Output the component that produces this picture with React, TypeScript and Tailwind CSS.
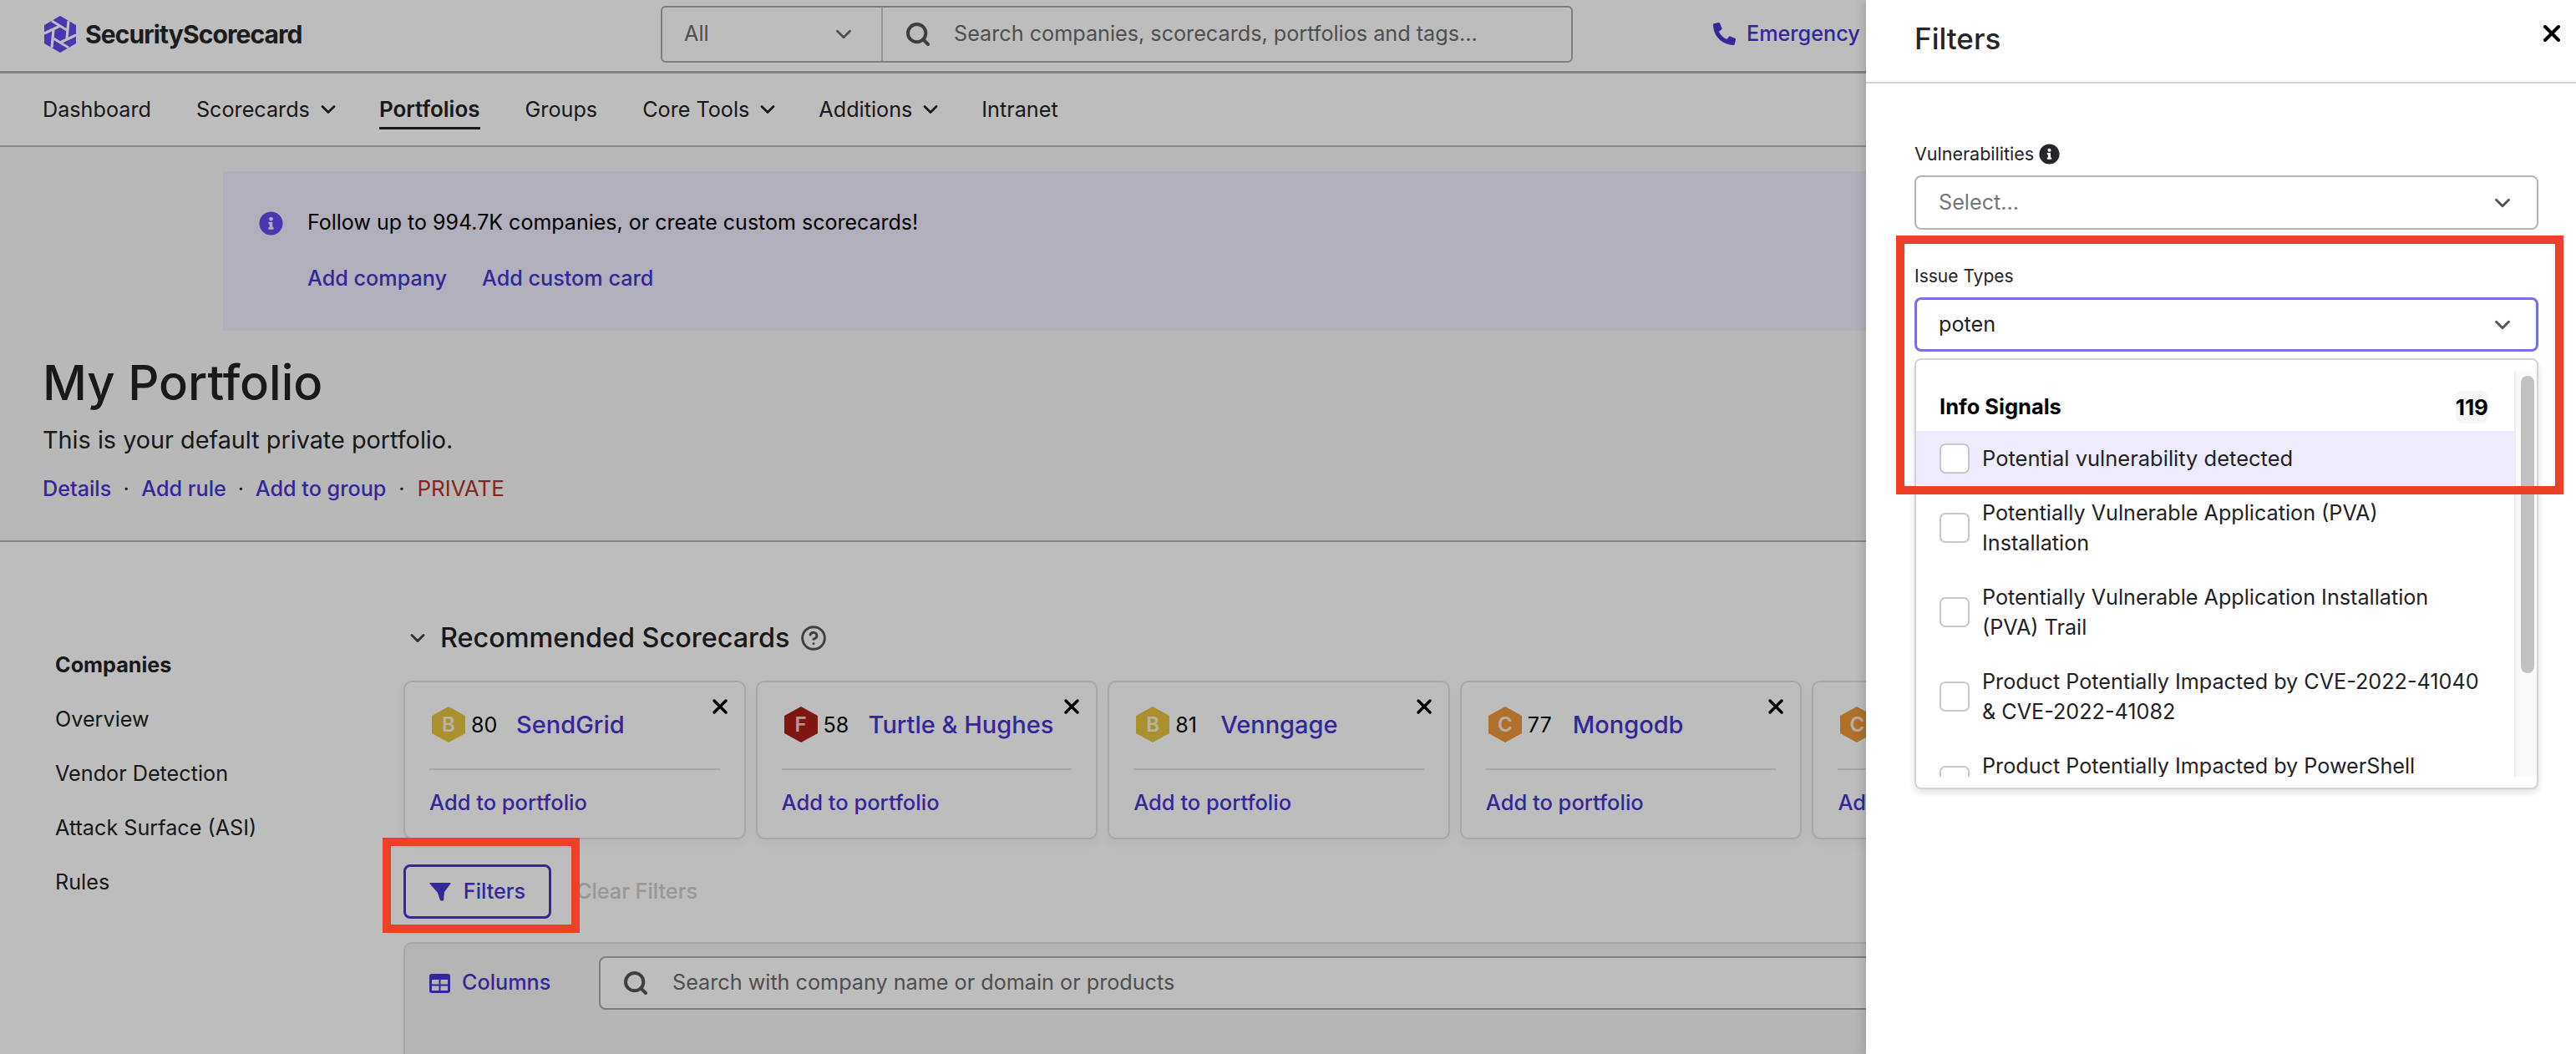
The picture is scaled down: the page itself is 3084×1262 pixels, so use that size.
import React from 'react';
import { ChevronDown, CircleHelp, Search, X } from 'lucide-react';
import { FaInfoCircle, FaPhoneAlt } from 'react-icons/fa';

// Marque : hexagone découpé en moulinet
function Logo() {
  return (
    <svg viewBox="0 0 38 44" className="w-[38px] h-[44px] shrink-0">
      <polygon points="19,0 38,11 38,33 19,44 0,33 0,11" fill="#6549ee" />
      <g stroke="#ffffff" strokeWidth="3.2" fill="none">
        <path d="M9 6 L27 17" />
        <path d="M29 6 L27 27" />
        <path d="M38 23 L19 32" />
        <path d="M29 38 L11 27" />
        <path d="M9 38 L11 17" />
        <path d="M0 21 L19 12" />
      </g>
    </svg>
  );
}

function GradeHex({ grade, color }: { grade: string; color: string }) {
  return (
    <div className="relative w-[40px] h-[43px] shrink-0 flex items-center justify-center">
      <svg viewBox="0 0 40 43" className="absolute inset-0 w-full h-full">
        <polygon points="20,0 40,11 40,32 20,43 0,32 0,11" fill={color} />
      </svg>
      <span className="relative text-[24px] font-semibold text-white/80 leading-none">{grade}</span>
    </div>
  );
}

function NavChevron() {
  return <ChevronDown className="w-[28px] h-[28px] -mr-[7px]" strokeWidth={2.4} />;
}

const cards = [
  { grade: 'B', color: '#e7c341', score: '80', name: 'SendGrid' },
  { grade: 'F', color: '#aa1f16', score: '58', name: 'Turtle & Hughes' },
  { grade: 'B', color: '#e7c341', score: '81', name: 'Venngage' },
  { grade: 'C', color: '#ee973a', score: '77', name: 'Mongodb' },
  { grade: 'C', color: '#ee973a', score: '75', name: 'Zendesk' },
];

const issueTypes = [
  'Potentially Vulnerable Application (PVA) Installation',
  'Potentially Vulnerable Application Installation (PVA) Trail',
  'Product Potentially Impacted by CVE-2022-41040 & CVE-2022-41082',
  'Product Potentially Impacted by PowerShell Vulnerabilities',
];

function ScorecardCard({ card }: { card: (typeof cards)[number] }) {
  return (
    <div className="relative w-[409.6px] h-[190px] shrink-0 bg-white border-2 border-[#e2e2e2] rounded-[10px] shadow-[0_6px_14px_rgba(0,0,0,0.04)] px-[29px] pt-[29px]">
      <X className="absolute top-[15px] right-[15px] w-[28px] h-[28px] text-black" strokeWidth={3} />
      <div className="flex items-center h-[43px] pl-[3px]">
        <GradeHex grade={card.grade} color={card.color} />
        <span className="ml-[7px] w-[31px] text-[25px] leading-[36px] text-black">{card.score}</span>
        <span className="ml-[23px] text-[29px] leading-[40px] font-medium text-[#4834d0] whitespace-nowrap">{card.name}</span>
      </div>
      <div className="mt-[31px] border-t-2 border-[#e2e2e2] pt-[21px]">
        <span className="text-[25.5px] leading-[36px] font-medium text-[#4834d0]">Add to portfolio</span>
      </div>
    </div>
  );
}

export default function App() {
  return (
    <div className="relative w-[3084px] h-[1262px] overflow-hidden bg-white font-['Inter',sans-serif] text-[25.2px] text-[#222226]">
      {/* Barre supérieure */}
      <header className="h-[88px] border-b-[3px] border-[#b0b0b0] flex items-center pl-[53px] pb-[3px]">
        <div className="w-[738px] flex items-center gap-[11px]">
          <Logo />
          <span className="text-[30px] font-bold tracking-[-0.9px] text-[#26262a]">SecurityScorecard</span>
        </div>
        <div className="w-[1092px] h-[68px] border-2 border-[#aaaaaa] rounded-[6px] flex items-center">
          <div className="w-[264px] h-full border-r-2 border-[#cccccc] flex items-center justify-between pl-[26px] pr-[30px] text-[#6b6b6b]">
            <span>All</span>
            <ChevronDown className="w-[30px] h-[30px]" strokeWidth={2.2} />
          </div>
          <Search className="ml-[26px] w-[32px] h-[32px] text-[#555555]" strokeWidth={3} />
          <span className="ml-[27px] text-[#6b6b6b] whitespace-nowrap">Search companies, scorecards, portfolios and tags...</span>
        </div>
        <div className="ml-[168px] flex items-center gap-[13px] text-[#4834d0] font-medium">
          <FaPhoneAlt className="w-[27px] h-[27px]" />
          <span>Emergency</span>
        </div>
      </header>

      {/* Navigation principale */}
      <nav className="h-[88px] border-b-2 border-[#b8b8b8] flex items-center pl-[51px] gap-[54px] leading-[36px]">
        <span>Dashboard</span>
        <span className="flex items-center gap-[8px]">Scorecards<NavChevron /></span>
        <span className="text-[26px] font-semibold border-y-[3px] border-t-transparent border-b-[#222226] py-[3px]">Portfolios</span>
        <span>Groups</span>
        <span className="flex items-center gap-[8px]">Core Tools<NavChevron /></span>
        <span className="flex items-center gap-[8px]">Additions<NavChevron /></span>
        <span>Intranet</span>
      </nav>

      {/* En-tête du portfolio */}
      <section className="h-[473px] bg-[#f9f9f9] border-b-2 border-[#b8b8b8] pt-[29px]">
        <div className="ml-[267px] h-[191px] bg-[#eeecfd] pl-[43px] pt-[44px]">
          <div className="flex items-center h-[36px]">
            <FaInfoCircle className="w-[29px] h-[29px] text-[#6549ee]" />
            <span className="ml-[29px] text-[25px] text-black">Follow up to 994.7K companies, or create custom scorecards!</span>
          </div>
          <div className="mt-[30px] ml-[58px] flex gap-[42px] font-medium text-[#4834d0] leading-[36px]">
            <span>Add company</span>
            <span>Add custom card</span>
          </div>
        </div>
        <div className="pl-[51px]">
          <h1 className="mt-[26px] text-[58px] leading-[72px] font-medium">My Portfolio</h1>
          <p className="mt-[13px] text-[28.8px] leading-[40px]">This is your default private portfolio.</p>
          <div className="mt-[20px] flex items-center leading-[36px]">
            <span className="font-medium text-[#4834d0]">Details</span>
            <span className="w-[36px] text-center">·</span>
            <span className="font-medium text-[#4834d0]">Add rule</span>
            <span className="w-[35px] text-center">·</span>
            <span className="font-medium text-[#4834d0]">Add to group</span>
            <span className="w-[37px] text-center">·</span>
            <span className="text-[26px] text-[#b63230]">PRIVATE</span>
          </div>
        </div>
      </section>

      <div className="flex">
        {/* Menu latéral */}
        <aside className="w-[483px] shrink-0 pl-[66px] pt-[129px] flex flex-col gap-[29px] leading-[36px]">
          <span className="font-bold">Companies</span>
          <span>Overview</span>
          <span>Vendor Detection</span>
          <span>Attack Surface (ASI)</span>
          <span>Rules</span>
        </aside>

        <main className="flex-1 min-w-0 pt-[93px]">
          <div className="flex items-center h-[44px]">
            <ChevronDown className="ml-[3px] w-[28px] h-[28px] text-[#444444]" strokeWidth={2.5} />
            <span className="ml-[13px] text-[32.4px] font-medium whitespace-nowrap">Recommended Scorecards</span>
            <CircleHelp className="ml-[13px] w-[32px] h-[32px] text-[#555555]" strokeWidth={2.2} />
          </div>

          <div className="mt-[29px] flex gap-[12px]">
            {cards.map((card) => (
              <ScorecardCard key={card.name} card={card} />
            ))}
          </div>

          <div className="mt-[30px] flex items-center">
            <button className="w-[177px] h-[65px] border-[3px] border-[#4834d0] rounded-[8px] flex items-center justify-center gap-[15px] font-medium text-[#4834d0]">
              <svg viewBox="0 0 26 22" className="w-[26px] h-[22px]">
                <path d="M1 0 H25 Q26 0 25.5 1 L18 11 L17 21 Q15 22 13 21 L10 12 L0.5 1 Q0 0 1 0 Z" fill="#4834d0" />
              </svg>
              Filters
            </button>
            <span className="ml-[30px] font-medium text-[#cccccc]">Clear Filters</span>
          </div>

          <div className="mt-[28px] h-[200px] bg-[#f4f4f4] border-2 border-[#e2e2e2] rounded-t-[10px] pl-[29px] pt-[15px] flex">
            <div className="w-[203px] h-[64px] flex items-center gap-[14px] font-medium text-[#4834d0]">
              <svg viewBox="0 0 25 23" className="w-[25px] h-[23px]">
                <rect width="25" height="23" rx="3" fill="#4834d0" />
                <rect x="3" y="7" width="8.5" height="5.5" fill="#f4f4f4" />
                <rect x="13.5" y="7" width="8.5" height="5.5" fill="#f4f4f4" />
                <rect x="3" y="14.5" width="8.5" height="5.5" fill="#f4f4f4" />
                <rect x="13.5" y="14.5" width="8.5" height="5.5" fill="#f4f4f4" />
              </svg>
              Columns
            </div>
            <div className="flex-1 h-[64px] bg-white border-2 border-[#aaaaaa] rounded-[8px] flex items-center pl-[26px]">
              <Search className="w-[32px] h-[32px] text-[#555555]" strokeWidth={3} />
              <span className="ml-[28px] text-[#6b6b6b]">Search with company name or domain or products</span>
            </div>
          </div>
        </main>
      </div>

      {/* Voile sombre sous le panneau */}
      <div className="absolute inset-0 bg-black/[.26]" />

      {/* Annotation : bouton Filters */}
      <div className="absolute left-[458px] top-[1003px] w-[236px] h-[114px] border-[10px] border-[#ee4026]" />

      {/* Panneau Filters */}
      <div className="absolute top-0 right-0 bottom-0 w-[850px] bg-white shadow-[-4px_0_10px_rgba(0,0,0,0.12)]">
        <div className="relative h-[100px] border-b-2 border-[#d4d4d4] pl-[58px] pt-[22px]">
          <h2 className="text-[35px] leading-[48px] font-medium text-[#26262a]">Filters</h2>
          <X className="absolute top-[24px] right-[13px] w-[32px] h-[32px] text-black" strokeWidth={3} />
        </div>

        <div className="pl-[58px] pr-[45px] pt-[68px]">
          <div className="flex items-center gap-[6px] h-[32px] text-[21.5px]">
            Vulnerabilities
            <FaInfoCircle className="w-[25px] h-[25px] text-[#26262a]" />
          </div>
          <div className="mt-[10px] h-[65px] border-2 border-[#b4b4b4] rounded-[8px] flex items-center justify-between pl-[27px] pr-[26px] text-[#777777]">
            Select...
            <ChevronDown className="w-[30px] h-[30px] text-[#555555]" strokeWidth={2.4} />
          </div>

          <div className="mt-[40px] h-[32px] flex items-center text-[21px]">Issue Types</div>
          <div className="mt-[9px] h-[65px] border-[3px] border-[#7b6ee8] rounded-[8px] flex items-center justify-between pl-[26px] pr-[25px]">
            poten
            <ChevronDown className="w-[30px] h-[30px] text-[#555555]" strokeWidth={2.4} />
          </div>

          {/* Liste déroulante */}
          <div className="mt-[8px] h-[516px] border-2 border-[#d4d4d4] rounded-[8px] shadow-[0_4px_8px_rgba(0,0,0,0.12)] py-[13px] bg-white">
            <div className="h-[486px] flex overflow-hidden">
              <div className="w-[716px] shrink-0">
                <div className="h-[72px] pt-[14px] pl-[28px] pr-[31px] flex items-center justify-between font-bold text-[25.5px] text-black">
                  <span>Info Signals</span>
                  <span className="text-[26px] bg-[#f6f6f6] rounded-[8px]">119</span>
                </div>
                <div className="h-[65px] bg-[#eeecfc] pl-[28px] flex items-center gap-[15px]">
                  <div className="w-[36px] h-[36px] shrink-0 bg-white border-2 border-[#c8c8c8] rounded-[7px]" />
                  <span className="text-[25.5px] leading-[36px]">Potential vulnerability detected</span>
                </div>
                {issueTypes.map((issue) => (
                  <div key={issue} className="h-[101px] pl-[28px] flex items-center gap-[15px]">
                    <div className="w-[36px] h-[36px] shrink-0 bg-white border-2 border-[#c8c8c8] rounded-[7px]" />
                    <span className="w-[602px] leading-[36px]">{issue}</span>
                  </div>
                ))}
              </div>
              <div className="flex-1 bg-[#fafafa] border-l-2 border-[#ececec] pl-[6px] pt-[6px]">
                <div className="w-[16px] h-[356px] bg-[#c1c1c1] rounded-full" />
              </div>
            </div>
          </div>
        </div>

        {/* Annotation : Issue Types */}
        <div className="absolute left-[36px] top-[282px] w-[799px] h-[310px] border-[10px] border-[#ee4026]" />
      </div>
    </div>
  );
}
